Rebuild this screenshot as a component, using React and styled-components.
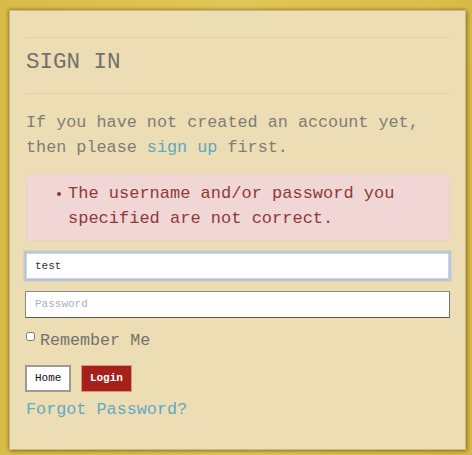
import React from 'react';
import styled, { createGlobalStyle } from 'styled-components';

const mono = `"Courier New", "Liberation Mono", monospace`;

const Global = createGlobalStyle`
  html, body {
    margin: 0;
    padding: 0;
  }
  body {
    background-color: #dcbf4c;
    background-image:
      radial-gradient(circle at 20% 30%, rgba(150, 120, 20, 0.18) 0, transparent 40px),
      radial-gradient(circle at 70% 80%, rgba(150, 120, 20, 0.15) 0, transparent 50px),
      radial-gradient(circle at 90% 10%, rgba(255, 230, 120, 0.25) 0, transparent 60px),
      linear-gradient(90deg, #d9bb48, #e2c657 50%, #d8b945);
    font-family: ${mono};
  }
`;

const Page = styled.div`
  padding: 10px 6px 5px 9px;
  min-height: 455px;
  box-sizing: border-box;
`;

const Panel = styled.div`
  box-sizing: border-box;
  width: 457px;
  height: 440px;
  background: #ecddb5;
  border: 1px solid #cdb982;
  box-shadow: 1px 1px 4px rgba(70, 50, 0, 0.55), -1px -1px 3px rgba(90, 70, 0, 0.3);
  padding: 26px 15px 0 15px;
  display: flex;
  flex-direction: column;
`;

const Rule = styled.div`
  height: 1px;
  background: #e3d1a7;
`;

const Title = styled.h1`
  margin: 12px 0 18.5px 1px;
  font-family: ${mono};
  font-weight: normal;
  font-size: 22.5px;
  line-height: 24px;
  color: #74726a;
`;

const Intro = styled.p`
  margin: 16.5px 0 0 1px;
  font-size: 16.8px;
  line-height: 25px;
  color: #7e7d76;
`;

const Link = styled.a`
  color: #5ea7c0;
  text-decoration: none;
`;

const Alert = styled.div`
  margin-top: 13.5px;
  margin-left: 1px;
  box-sizing: border-box;
  height: 67px;
  background: #f1d6d6;
  border: 1px solid #ecd0d0;
  border-radius: 3px;
  padding: 6.5px 0 0 30px;
  color: #8e3a38;
  font-size: 17px;
  line-height: 25px;
`;

const AlertItem = styled.div`
  display: flex;
  align-items: flex-start;
`;

const Dot = styled.span`
  flex: none;
  width: 4px;
  height: 4px;
  border-radius: 50%;
  background: #8e3a38;
  margin: 11px 7px 0 0;
`;

const Input = styled.input`
  box-sizing: border-box;
  display: block;
  width: 425px;
  height: ${p => (p.$focused ? 28 : 27)}px;
  margin-top: 11px;
  padding: 0 9px;
  font-family: ${mono};
  font-size: 11px;
  color: #333;
  background: #fff;
  border: 1px solid;
  border-color: ${p => (p.$focused ? '#b4c3de' : '#8f8b80 #77736a #5e5a50 #8f8b80')};
  box-shadow: ${p => (p.$focused ? '0 0 0 1.5px #c3c8cc, inset 0 0 0 1px #c9d5ea' : 'none')};
  outline: none;
  border-radius: 0;

  &::placeholder {
    color: #a9b1c1;
  }
`;

const RememberRow = styled.label`
  display: flex;
  align-items: flex-start;
  margin-top: 13px;
  margin-left: 1px;
  font-size: 16.7px;
  line-height: 20px;
  color: #74726a;
`;

const Check = styled.input`
  width: 9px;
  height: 9px;
  margin: 1px 5px 0 0;
  accent-color: #fff;
`;

const Buttons = styled.div`
  display: flex;
  gap: 9.5px;
  margin-top: 14px;
`;

const Button = styled.button`
  box-sizing: border-box;
  height: 27px;
  padding: 0 8px;
  font-family: ${mono};
  font-size: 11px;
  font-weight: ${p => (p.$primary ? 'bold' : 'normal')};
  cursor: pointer;
  color: ${p => (p.$primary ? '#fff' : '#111')};
  background: ${p => (p.$primary ? '#a8201a' : '#fff')};
  border: ${p => (p.$primary ? '1px solid #d29886' : '2px solid #a19b8f')};
  border-radius: 0;
`;

const Forgot = styled.a`
  margin-top: 8px;
  margin-left: 1px;
  font-size: 16.8px;
  line-height: 20px;
  color: #62a9c1;
  text-decoration: none;
`;

export default function App() {
  return (
    <Page>
      <Global />
      <Panel>
        <Rule />
        <Title>SIGN IN</Title>
        <Rule />
        <Intro>
          If you have not created an account yet, then please <Link href="#">sign up</Link> first.
        </Intro>
        <Alert>
          <AlertItem>
            <Dot />
            <span>The username and/or password you specified are not correct.</span>
          </AlertItem>
        </Alert>
        <Input $focused defaultValue="test" />
        <Input type="password" placeholder="Password" />
        <RememberRow>
          <Check type="checkbox" />
          Remember Me
        </RememberRow>
        <Buttons>
          <Button>Home</Button>
          <Button $primary>Login</Button>
        </Buttons>
        <Forgot href="#">Forgot Password?</Forgot>
      </Panel>
    </Page>
  );
}
